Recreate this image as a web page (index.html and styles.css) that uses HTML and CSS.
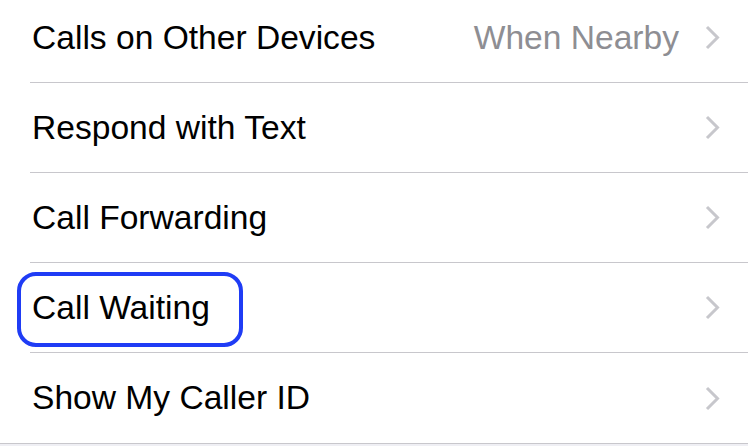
FILE: index.html
```html
<!DOCTYPE html>
<html lang="en">
<head>
    <meta charset="UTF-8">
    <meta name="viewport" content="width=device-width, initial-scale=1.0">
    <title>Phone</title>
    <link rel="stylesheet" href="styles.css">
</head>
<body>
    <ul class="settings">
        <li class="row">
            <span class="label">Calls on Other Devices</span>
            <span class="detail">When Nearby</span>
            <svg class="chevron" viewBox="0 0 15 25"><path d="M2 2 L12.5 12.5 L2 23"/></svg>
        </li>
        <li class="row">
            <span class="label">Respond with Text</span>
            <svg class="chevron" viewBox="0 0 15 25"><path d="M2 2 L12.5 12.5 L2 23"/></svg>
        </li>
        <li class="row">
            <span class="label">Call Forwarding</span>
            <svg class="chevron" viewBox="0 0 15 25"><path d="M2 2 L12.5 12.5 L2 23"/></svg>
        </li>
        <li class="row">
            <span class="label highlight">Call Waiting</span>
            <svg class="chevron" viewBox="0 0 15 25"><path d="M2 2 L12.5 12.5 L2 23"/></svg>
        </li>
        <li class="row">
            <span class="label">Show My Caller ID</span>
            <svg class="chevron" viewBox="0 0 15 25"><path d="M2 2 L12.5 12.5 L2 23"/></svg>
        </li>
    </ul>
</body>
</html>
```

FILE: styles.css
```css
body {
    margin: 0;
    padding: 0;
    background-color: #efeff4;
    font-family: "Liberation Sans", Arial, sans-serif;
    overflow: hidden;
}
.settings {
    list-style-type: none;
    margin: -7px 0 0 0;
    padding: 0 0 0 30px;
    background-color: #fff;
    border-bottom: 1px solid #c8c7cc;
}
.row {
    box-sizing: border-box;
    display: flex;
    align-items: center;
    height: 90px;
    padding-right: 28px;
    border-bottom: 1px solid #c8c7cc;
    color: #000;
    font-size: 33.6px;
}
.row:last-child {
    border-bottom: none;
}
.label {
    position: relative;
    flex: 1;
    padding-left: 2px;
}
.label.highlight::before {
    content: "";
    position: absolute;
    left: -13px;
    top: -17px;
    width: 218px;
    height: 67px;
    border: 4px solid #1f3cf5;
    border-radius: 19px;
}
.detail {
    color: #8e8e93;
    margin-right: 26px;
}
.chevron {
    width: 15px;
    height: 25px;
    fill: none;
    stroke: #c7c7cc;
    stroke-width: 3;
}
```
